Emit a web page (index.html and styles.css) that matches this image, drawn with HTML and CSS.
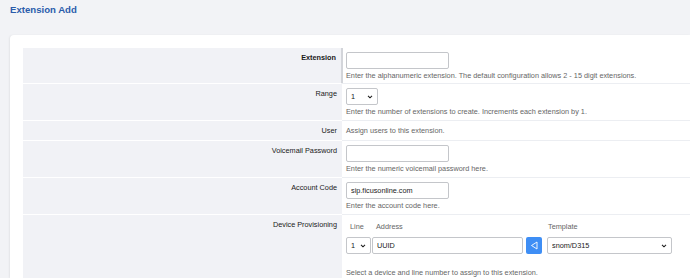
FILE: index.html
```html
<!DOCTYPE html>
<html lang="en">
<head>
    <meta charset="UTF-8">
    <meta name="viewport" content="width=device-width, initial-scale=1.0">
    <title>Extension Add</title>
    <link rel="stylesheet" href="styles.css">
</head>
<body>
    <div class="header">
        <h1>Extension Add</h1>
    </div>
    <div class="card">
        <div class="form-table">
            <div class="row">
                <div class="label label-first"><b>Extension</b></div>
                <div class="value value-first">
                    <input type="text" class="field">
                    <div class="help">Enter the alphanumeric extension. The default configuration allows 2 - 15 digit extensions.</div>
                </div>
            </div>
            <div class="row">
                <div class="label">Range</div>
                <div class="value">
                    <select class="field small-select">
                        <option>1</option>
                    </select>
                    <div class="help">Enter the number of extensions to create. Increments each extension by 1.</div>
                </div>
            </div>
            <div class="row">
                <div class="label">User</div>
                <div class="value">
                    <div class="help inline">Assign users to this extension.</div>
                </div>
            </div>
            <div class="row">
                <div class="label">Voicemail Password</div>
                <div class="value">
                    <input type="password" class="field">
                    <div class="help">Enter the numeric voicemail password here.</div>
                </div>
            </div>
            <div class="row">
                <div class="label">Account Code</div>
                <div class="value">
                    <input type="text" class="field" value="sip.ficusonline.com">
                    <div class="help">Enter the account code here.</div>
                </div>
            </div>
            <div class="row">
                <div class="label">Device Provisioning</div>
                <div class="value">
                    <div class="device-grid">
                        <span class="col-head">Line</span>
                        <span class="col-head">Address</span>
                        <span></span>
                        <span class="col-head">Template</span>
                        <select class="field line-select">
                            <option>1</option>
                        </select>
                        <input type="text" class="field address" value="UUID">
                        <button class="btn-blue" type="button">
                            <svg width="8" height="9" viewBox="0 0 8 9"><path d="M7 1 L1.5 4.5 L7 8 Z" fill="none" stroke="#fff" stroke-width="0.9" stroke-linejoin="round"/></svg>
                        </button>
                        <select class="field">
                            <option>snom/D315</option>
                        </select>
                    </div>
                    <div class="help help-device">Select a device and line number to assign to this extension.</div>
                </div>
            </div>
        </div>
    </div>
</body>
</html>
```

FILE: styles.css
```css
body {
    font-family: 'Liberation Sans', Arial, sans-serif;
    margin: 0;
    padding: 0;
    background-color: #f2f3f6;
    color: #1a1a1a;
    font-size: 7.3px;
    overflow: hidden;
    height: 278px;
}
.header {
    padding: 4px 10px 0 10px;
    height: 31px;
}
.header h1 {
    margin: 0;
    font-size: 9.6px;
    font-weight: bold;
    color: #2a5cab;
}
.card {
    margin-left: 10px;
    box-sizing: border-box;
    background-color: #fff;
    border-radius: 4px 0 0 0;
    box-shadow: -1px 0 2px rgba(0, 0, 0, 0.06);
    padding: 13px 0 0 13px;
    height: 243px;
    overflow: hidden;
}
.row {
    display: grid;
    grid-template-columns: 319px 1fr;
}
.label {
    background-color: #f1f2f6;
    border-bottom: 1px solid #fff;
    text-align: right;
    padding: 5px 5px 0 0;
    line-height: 10px;
}
.label-first {
    border-right: 2px solid #d3d5da;
    margin-right: -1px;
}
.value {
    border-bottom: 1px solid #eceef2;
    padding: 4px 0 4px 4px;
}
.value-first {
    padding-bottom: 3px;
}
.field {
    display: block;
    box-sizing: border-box;
    width: 103px;
    height: 17px;
    border: 1px solid #c4c6ca;
    border-radius: 2px;
    background: #fff;
    font-family: 'Liberation Sans', Arial, sans-serif;
    font-size: 7.3px;
    color: #222;
    padding: 0 4px;
    margin: 0;
}
select.field {
    -webkit-appearance: none;
    appearance: none;
    background-image: url("data:image/svg+xml;utf8,<svg xmlns='http://www.w3.org/2000/svg' width='7' height='5' viewBox='0 0 7 5'><path d='M1 1 L3.5 3.5 L6 1' fill='none' stroke='%23222' stroke-width='1.4'/></svg>");
    background-repeat: no-repeat;
    background-position: right 4px center;
    background-size: 6px 4px;
}
.small-select {
    width: 32px;
}
.help {
    color: #666;
    margin-top: 2px;
    line-height: 9px;
}
.help.inline {
    margin-top: 1px;
    line-height: 10px;
}
.device-grid {
    display: grid;
    grid-template-columns: 25px 152px 21px 125px;
    column-gap: 1px;
    row-gap: 6px;
    margin-top: 3px;
}
.col-head {
    color: #666;
    padding-left: 4px;
    line-height: 9px;
}
.device-grid .field {
    width: 100%;
}
.device-grid .address {
    width: 151px;
}
.line-select {
    padding-left: 4px;
}
.device-grid .col-head:nth-child(4) {
    padding-left: 1px;
}
.btn-blue {
    width: 16px;
    height: 17px;
    margin-left: 1px;
    background-color: #3e8ef5;
    border: none;
    border-radius: 2px;
    padding: 0;
    display: flex;
    align-items: center;
    justify-content: center;
}
.help-device {
    margin-top: 14px;
}
```
